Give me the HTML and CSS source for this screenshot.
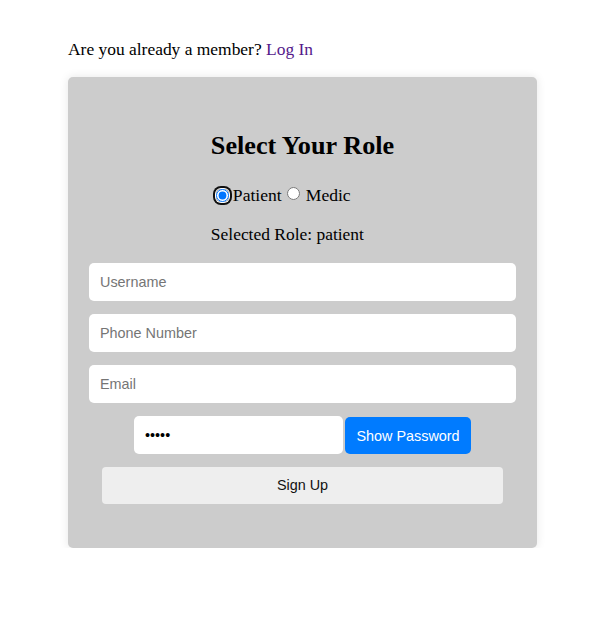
FILE: index.html
```html
<!DOCTYPE html>
<html>
<head>
<meta charset="utf-8">
<link rel="stylesheet" href="styles.css">
</head>
<body>
<div class="wrap">
  <p class="member">Are you already a member? <a href="#" class="login">Log In</a></p>
  <div class="card">
    <div class="head">
      <h2 class="title">Select Your Role</h2>
      <div class="roles">
        <span class="focus-ring"><input type="radio" name="role" class="radio" checked></span><span class="role-label first">Patient</span>
        <input type="radio" name="role" class="radio radio-plain"><span class="role-label second">Medic</span>
      </div>
      <p class="selected">Selected Role: patient</p>
    </div>
    <input class="field" type="text" placeholder="Username">
    <input class="field" type="text" placeholder="Phone Number">
    <input class="field" type="email" placeholder="Email">
    <div class="pw-row">
      <input class="pw" type="password" value="12345">
      <button class="show-btn" type="button">Show Password</button>
    </div>
    <button class="signup" type="button">Sign Up</button>
  </div>
</div>
</body>
</html>
```

FILE: styles.css
```css
body {
  margin: 8px;
  font-family: "Liberation Serif", "Times New Roman", serif;
  background: #fff;
  color: #000;
}
.wrap {
  width: 469px;
  margin: 31px 0 0 60px;
}
.member {
  margin: 0 0 18px;
  font-size: 17.45px;
  line-height: 20px;
}
.login {
  color: #551a8b;
  text-decoration: none;
}
.card {
  box-sizing: border-box;
  background: #ccc;
  border-radius: 5px;
  padding: 54px 21px 44px;
  box-shadow: 0 0 10px rgba(0, 0, 0, 0.1);
  display: flex;
  flex-direction: column;
  align-items: center;
}
.head {
  display: flex;
  flex-direction: column;
  align-items: flex-start;
}
.title {
  margin: 0;
  font-size: 26.2px;
  line-height: 30px;
  font-weight: bold;
  text-align: center;
  align-self: stretch;
}
.roles {
  margin-top: 24px;
  height: 20px;
  display: flex;
  align-items: center;
  font-size: 17.6px;
  line-height: 20px;
}
.focus-ring {
  display: inline-flex;
  border-radius: 5px;
  box-shadow: 0 0 0 1px #fff, 0 0 0 3px #101010;
  margin: 0 3px 0 5px;
}
.radio {
  width: 13px;
  height: 13px;
  margin: 0;
  accent-color: #0075ff;
}
.radio-plain {
  margin: 0 3px 3px 5px;
}
.role-label {
  display: inline-block;
}
.role-label.first {
  margin-left: 1px;
}
.role-label.second {
  margin-left: 3px;
}
.selected {
  margin: 19px 0 0;
  font-size: 17.45px;
  line-height: 20px;
}
.field {
  box-sizing: border-box;
  width: 100%;
  height: 38px;
  margin: 19px 0 0;
  padding: 0 11px;
  border: none;
  border-radius: 5px;
  background: #fff;
  font-family: "Liberation Sans", Arial, sans-serif;
  font-size: 14.4px;
}
.field + .field {
  margin-top: 13px;
}
.field::placeholder,
.pw::placeholder {
  color: #757575;
}
.pw-row {
  margin-top: 13px;
  display: flex;
  align-items: flex-start;
  gap: 2px;
}
.pw {
  box-sizing: border-box;
  width: 209px;
  height: 38px;
  padding: 0 11px;
  border: none;
  border-radius: 5px;
  background: #fff;
  font-family: "Liberation Sans", Arial, sans-serif;
  font-size: 14.4px;
  margin: 0;
}
.show-btn {
  box-sizing: border-box;
  margin-top: 1px;
  width: 126px;
  height: 37px;
  border: none;
  border-radius: 5px;
  background: #007bff;
  color: #fff;
  font-family: "Liberation Sans", Arial, sans-serif;
  font-size: 14.4px;
  padding: 0;
}
.signup {
  box-sizing: border-box;
  margin-top: 13px;
  width: 401px;
  height: 37px;
  border: none;
  border-radius: 4px;
  background: #eee;
  color: #111;
  font-family: "Liberation Sans", Arial, sans-serif;
  font-size: 14.4px;
  line-height: 16px;
  padding: 0 0 2px;
}
```
